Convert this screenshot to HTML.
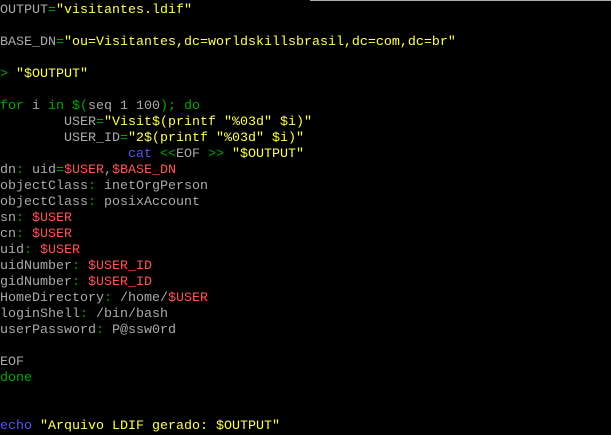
<!DOCTYPE html>
<html><head><meta charset="utf-8"><style>
html,body{margin:0;padding:0;background:#000;width:611px;height:432px;overflow:hidden}
.t{position:absolute;left:0;top:3px;font-family:"Liberation Mono","DejaVu Sans Mono",monospace;font-size:13.33px;line-height:16px;color:#aaa;white-space:pre}
.top{position:absolute;left:310px;top:0;width:301px;height:1px;background:#aaa}
.y{color:#ffff55}.g{color:#00aa00}.r{color:#ff5555}.b{color:#5555ff}
.i1{display:inline-block;width:64px}.i2{display:inline-block;width:128px}
</style></head><body><div class="top"></div><div class="t">OUTPUT<span class="g">=</span><span class="y">"visitantes.ldif"</span>

BASE_DN<span class="g">=</span><span class="y">"ou=Visitantes,dc=worldskillsbrasil,dc=com,dc=br"</span>

<span class="g">&gt;</span> <span class="y">"$OUTPUT"</span>

<span class="g">for</span> i <span class="g">in</span> <span class="g">$(</span>seq 1 100<span class="g">); do</span>
<span class="i1"></span>USER<span class="g">=</span><span class="y">"Visit$(printf "%03d" $i)"</span>
<span class="i1"></span>USER_ID<span class="g">=</span><span class="y">"2$(printf "%03d" $i)"</span>
<span class="i2"></span><span class="b">cat</span> <span class="g">&lt;&lt;</span>EOF <span class="g">&gt;&gt;</span> <span class="y">"$OUTPUT"</span>
dn<span class="g">:</span> uid<span class="g">=</span><span class="r">$USER</span>,<span class="r">$BASE_DN</span>
objectClass<span class="g">:</span> inetOrgPerson
objectClass<span class="g">:</span> posixAccount
sn<span class="g">:</span> <span class="r">$USER</span>
cn<span class="g">:</span> <span class="r">$USER</span>
uid<span class="g">:</span> <span class="r">$USER</span>
uidNumber<span class="g">:</span> <span class="r">$USER_ID</span>
gidNumber<span class="g">:</span> <span class="r">$USER_ID</span>
HomeDirectory<span class="g">:</span> /home/<span class="r">$USER</span>
loginShell<span class="g">:</span> /bin/bash
userPassword<span class="g">:</span> P@ssw0rd

EOF
<span class="g">done</span>


<span class="b">echo</span> <span class="y">"Arquivo LDIF gerado: $OUTPUT"</span></div></body></html>
